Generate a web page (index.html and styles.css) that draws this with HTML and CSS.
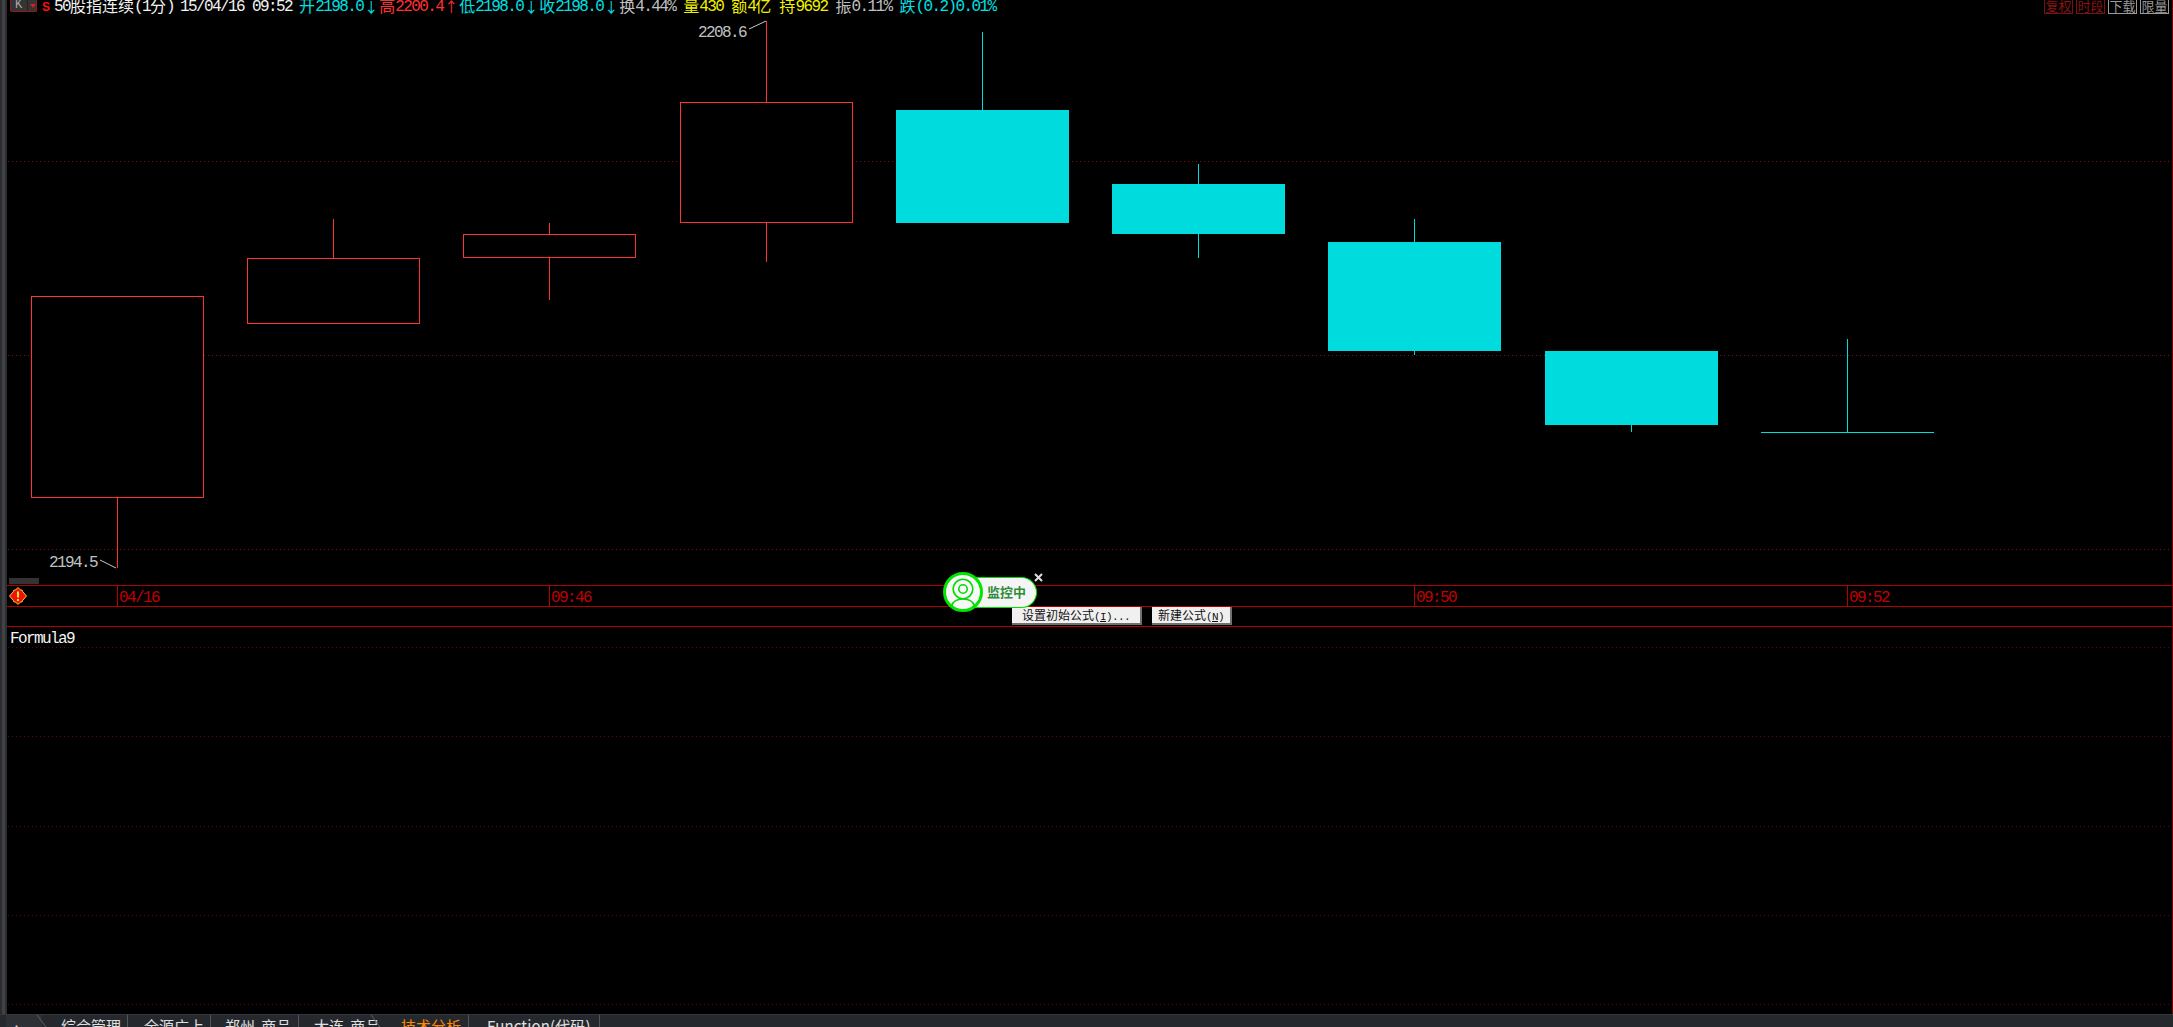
FILE: index.html
```html
<!DOCTYPE html>
<html lang="zh-CN">
<head>
<meta charset="utf-8">
<title>50股指连续</title>
<link rel="stylesheet" href="styles.css">
</head>
<body>
<div class="workspace">
  <div class="strip"></div>
  <div class="panes">
    <header class="header">
      <div class="quote">
        <span class="period-btn"><span class="period-k">K</span><span class="period-caret"></span></span>
        <span class="s-mark">S</span>
        <span class="line white"><span class="m">50</span>股指连续<span class="m">(1</span>分<span class="m">) </span><span class="m date">15/04/16 09:52 </span></span>
        <span class="line cyan">开<span class="m">2198.0</span><span class="arrow">↓</span></span>
        <span class="line red">高<span class="m">2200.4</span><span class="arrow">↑</span></span>
        <span class="line cyan">低<span class="m">2198.0</span><span class="arrow">↓</span></span>
        <span class="line cyan">收<span class="m">2198.0</span><span class="arrow">↓</span></span>
        <span class="line gray">换<span class="m">4.44% </span></span>
        <span class="line yellow">量<span class="m">430 </span></span>
        <span class="line yellow">额<span class="m">4</span>亿<span class="m"> </span></span>
        <span class="line yellow">持<span class="m">9692 </span></span>
        <span class="line gray">振<span class="m">0.11% </span></span>
        <span class="line cyan">跌<span class="m">(0.2)0.01%</span></span>
      </div>
      <div class="tools">
        <span class="tool tool-red">复权</span>
        <span class="tool tool-red">时段</span>
        <span class="tool tool-gray">下载</span>
        <span class="tool tool-gray">限量</span>
      </div>
    </header>

    <svg class="price-pane" viewBox="7 14 2165 571" width="2165" height="571" xmlns="http://www.w3.org/2000/svg">
      <g class="grid">
        <line x1="8" x2="2172" y1="161.5" y2="161.5"/>
        <line x1="8" x2="2172" y1="355.5" y2="355.5"/>
        <line x1="8" x2="2172" y1="549.5" y2="549.5"/>
      </g>
      <rect class="scroll-tick" x="9" y="578" width="30" height="6"/>

      <g class="up">
        <line x1="117.5" x2="117.5" y1="497" y2="568"/>
        <rect x="31.5" y="296.5" width="172" height="201"/>
        <line x1="333.5" x2="333.5" y1="219" y2="258"/>
        <rect x="247.5" y="258.5" width="172" height="65"/>
        <line x1="549.5" x2="549.5" y1="223" y2="300"/>
        <rect x="463.5" y="234.5" width="172" height="23"/>
        <line x1="766.5" x2="766.5" y1="21" y2="262"/>
        <rect x="680.5" y="102.5" width="172" height="120"/>
      </g>
      <g class="down">
        <line x1="982.5" x2="982.5" y1="32" y2="110"/>
        <rect x="896" y="110" width="173" height="113"/>
        <line x1="1198.5" x2="1198.5" y1="164" y2="258"/>
        <rect x="1112" y="184" width="173" height="50"/>
        <line x1="1414.5" x2="1414.5" y1="219" y2="355"/>
        <rect x="1328" y="242" width="173" height="109"/>
        <line x1="1631.5" x2="1631.5" y1="351" y2="432"/>
        <rect x="1545" y="351" width="173" height="74"/>
        <line x1="1847.5" x2="1847.5" y1="339" y2="432"/>
        <line x1="1761" x2="1934" y1="432.5" y2="432.5"/>
      </g>

      <g class="leader">
        <line x1="749" y1="29" x2="766" y2="21"/>
        <line x1="100" y1="560" x2="116" y2="568"/>
      </g>
      <text class="price-label" x="698" y="37">2208.6</text>
      <text class="price-label" x="49" y="567">2194.5</text>
    </svg>

    <div class="axis">
      <svg class="alert-icon" viewBox="0 0 18 18" width="18" height="18" xmlns="http://www.w3.org/2000/svg">
        <path class="alert-body" d="M9 .5 11.500 3H13l.8 1.800L17.500 9l-3.700 4.200L13 15h-1.500L9 17.500 6.500 15H5l-.8-1.800L.5 9l3.700-4.200L5 3h1.500z"/>
        <rect class="alert-mark" x="8" y="4.500" width="2" height="6"/>
        <rect class="alert-mark" x="8" y="12" width="2" height="2"/>
      </svg>
      <span class="mark mark-a"><span class="m">04/16</span></span>
      <span class="mark mark-b"><span class="m">09:46</span></span>
      <span class="mark mark-c"><span class="m">09:50</span></span>
      <span class="mark mark-d"><span class="m">09:52</span></span>
    </div>

    <div class="button-row">
      <button class="win-btn btn-init">设置初始公式<span class="btn-latin">(<u>I</u>)...</span></button>
      <button class="win-btn btn-new">新建公式<span class="btn-latin">(<u>N</u>)</span></button>
    </div>

    <section class="formula-pane">
      <svg class="formula-grid" viewBox="7 627 2165 387" width="2165" height="387" xmlns="http://www.w3.org/2000/svg">
        <g class="grid grid-dim">
          <line x1="8" x2="2172" y1="647.5" y2="647.5"/>
          <line x1="8" x2="2172" y1="736.5" y2="736.5"/>
          <line x1="8" x2="2172" y1="826.5" y2="826.5"/>
          <line x1="8" x2="2172" y1="915.5" y2="915.5"/>
          <line x1="8" x2="2172" y1="1004.5" y2="1004.5"/>
        </g>
      </svg>
      <div class="formula-name"><span class="m">Formula9</span></div>
    </section>
  </div>
</div>

<nav class="tabs">
  <span class="tab tab-nav"><span class="nav-arrow">▲</span></span>
  <span class="tab tab-1">综合管理</span>
  <span class="tab tab-2">全源广上</span>
  <span class="tab tab-3">郑州 商品</span>
  <span class="tab tab-4">大连 商品</span>
  <span class="tab tab-5">技术分析</span>
  <span class="tab tab-6">Function(代码)</span>
</nav>

<div class="monitor">
  <span class="monitor-avatar">
    <svg viewBox="0 0 34 34" width="34" height="34" xmlns="http://www.w3.org/2000/svg">
      <circle cx="17" cy="14" r="9.800"/>
      <circle cx="17" cy="14" r="4.200"/>
      <path d="M5.500 31c1.500-5 6-7 11.500-7s10 2 11.500 7"/>
    </svg>
  </span>
  <span class="monitor-pill">监控中</span>
  <svg class="monitor-close" viewBox="0 0 9 9" width="9" height="9" xmlns="http://www.w3.org/2000/svg">
    <path d="M1 1l7 7M8 1 1 8"/>
  </svg>
</div>
</body>
</html>
```

FILE: styles.css
```css
* { box-sizing: border-box; }

html, body {
  margin: 0;
  height: 100%;
  background: #000;
  overflow: hidden;
}

body {
  display: flex;
  flex-direction: column;
  font-family: "Noto Sans CJK SC", "Liberation Sans", sans-serif;
  color: #c8c8c8;
}

.m {
  font-family: "Liberation Mono", "Noto Sans CJK SC", monospace;
  font-size: 16px;
  letter-spacing: -1.6px;
  white-space: pre;
}

.workspace {
  flex: 1;
  min-height: 0;
  display: flex;
}

.strip {
  width: 7px;
  flex: none;
  background: linear-gradient(to right, #2a2c2f 0, #2a2c2f 2px, #404245 2px, #404245 5px, #2c2e31 5px);
}

.panes {
  flex: 1;
  min-width: 0;
  display: flex;
  flex-direction: column;
  border-right: 1px solid #7a0000;
}

/* header */
.header {
  height: 14px;
  flex: none;
  display: flex;
  justify-content: space-between;
  position: relative;
  z-index: 2;
}

.quote {
  display: flex;
  align-items: flex-start;
  padding-left: 3px;
  white-space: nowrap;
  font-size: 16px;
  line-height: 10px;
}

.period-btn {
  width: 27px;
  height: 12px;
  display: flex;
  align-items: center;
  border: 1px solid #8a1c1c;
  border-top: 0;
  border-radius: 0 0 2px 2px;
  background: #343434;
}

.period-k {
  width: 17px;
  padding-left: 4px;
  border-right: 1px solid #222;
  color: #a8a8a8;
  font: 12px/11px "Liberation Mono", monospace;
}

.period-caret {
  margin-left: 2px;
  border-left: 3px solid transparent;
  border-right: 3px solid transparent;
  border-top: 4px solid #d02020;
}

.s-mark {
  width: 17px;
  padding-left: 5px;
  color: #ff1010;
  font: bold 12px/14px "Liberation Sans", sans-serif;
}

.line { display: inline-flex; align-items: flex-start; }
.line .m { line-height: 14px; }
.line .date { margin-left: -2px; margin-right: -1px; }
.white { color: #f2f2f2; }
.cyan { color: #00e0e6; }
.red { color: #ff3232; }
.yellow { color: #f2f200; }
.gray { color: #c0c0c0; }

.arrow {
  width: 16px;
  text-align: center;
  font-size: 14px;
  line-height: 12px;
}

.tools {
  display: flex;
  gap: 3px;
  padding-right: 3px;
  align-items: flex-start;
}

.tool {
  width: 29px;
  height: 14px;
  border: 1px solid;
  border-top: 0;
  font-size: 13px;
  line-height: 11px;
  text-align: center;
  overflow: hidden;
}

.tool-red { color: #8a1414; border-color: #7a1010; }
.tool-gray { color: #9a9a9a; border-color: #9a9a9a; }

/* price pane */
.price-pane {
  display: block;
  flex: none;
  shape-rendering: crispEdges;
}

.grid line {
  stroke: #8c0a0a;
  stroke-width: 1;
  stroke-dasharray: 1 3;
}

.grid-dim line { stroke: #5e0808; }

.scroll-tick { fill: #333; }

.up rect { fill: #000; stroke: #ff3232; stroke-width: 1; }
.up line { stroke: #ff3232; stroke-width: 1; }
.down rect { fill: #00dcde; }
.down line { stroke: #00dcde; stroke-width: 1; }

.leader line {
  stroke: #c8c8c8;
  stroke-width: 1;
  shape-rendering: auto;
}

.price-label {
  fill: #c0c0c0;
  font-family: "Liberation Mono", monospace;
  font-size: 16px;
  letter-spacing: -1.6px;
}

/* time axis */
.axis {
  position: relative;
  flex: none;
  height: 22px;
  display: flex;
  align-items: center;
  padding-left: 2px;
  border-top: 1px solid #b30000;
  border-bottom: 1px solid #b30000;
}

.alert-icon { display: block; }
.alert-body { fill: #f01010; stroke: #f0d020; stroke-width: 1; }
.alert-mark { fill: #ffe820; }

.mark {
  position: absolute;
  top: 0;
  height: 20px;
  padding-left: 1px;
  border-left: 1px solid #b30000;
  color: #c00000;
  line-height: 18px;
}

.mark-a { left: 110px; }
.mark-b { left: 542px; }
.mark-c { left: 1407px; }
.mark-d { left: 1840px; }

/* buttons */
.button-row {
  flex: none;
  height: 20px;
  display: flex;
  gap: 10px;
  padding-left: 1005px;
  border-bottom: 1px solid #b30000;
}

.win-btn {
  height: 18px;
  margin: 0;
  padding: 0;
  border: 0;
  border-right: 2px solid #707070;
  border-bottom: 2px solid #707070;
  border-radius: 0;
  background: #f0f0f0;
  color: #111;
  font: 12px/15px "Noto Sans CJK SC", sans-serif;
}

.btn-latin {
  font-family: "Liberation Mono", monospace;
  font-size: 11px;
  letter-spacing: -0.6px;
}

.btn-init { width: 130px; }
.btn-new { width: 80px; }

/* formula pane */
.formula-pane {
  flex: 1;
  min-height: 0;
  position: relative;
}

.formula-grid {
  display: block;
  shape-rendering: crispEdges;
}

.formula-name {
  position: absolute;
  top: 0;
  left: 3px;
  color: #f4f4f4;
  line-height: 18px;
}

/* bottom tabs */
.tabs {
  flex: none;
  height: 13px;
  display: flex;
  padding-left: 6px;
  overflow: hidden;
  background: #25292d;
  border-top: 1px solid #34383c;
  color: #e0e0e0;
  font-size: 15px;
  line-height: 22px;
  word-spacing: 3px;
  white-space: nowrap;
}

.tab {
  flex: none;
  display: block;
  border-right: 1px solid #55585b;
}

.tab-nav {
  position: relative;
  width: 36px;
  padding-left: 6px;
  border-right: 0;
  background: #2d3135;
}

.tab-nav::after,
.tab-5::before {
  content: "";
  position: absolute;
  top: 0;
  bottom: 0;
  width: 1px;
  background: #5c6064;
  transform: skewX(36deg);
}

.tab-nav::after { right: 0; }
.tab-5::before { left: 0; }

.nav-arrow { font-size: 9px; color: #ccc; }

.tab-1 { width: 86px; padding-left: 19px; }
.tab-2 { width: 83px; padding-left: 16px; }
.tab-3 { width: 88px; padding-left: 14px; }
.tab-4 { width: 76px; padding-left: 15px; border-right: 0; }
.tab-5 { position: relative; width: 94px; padding-left: 26px; color: #ff8a00; }
.tab-6 { width: 131px; padding-left: 18px; letter-spacing: 0.15px; }

/* monitor badge */
.monitor {
  position: absolute;
  left: 943px;
  top: 572px;
  width: 94px;
  height: 40px;
  display: flex;
  align-items: center;
  z-index: 5;
}

.monitor-avatar {
  position: relative;
  z-index: 1;
  flex: none;
  width: 40px;
  height: 40px;
  display: flex;
  align-items: center;
  justify-content: center;
  border: 3px solid #00e600;
  border-radius: 50%;
  background: #f8f8f8;
}

.monitor-avatar svg {
  fill: none;
  stroke: #00dc00;
  stroke-width: 1.6;
}

.monitor-pill {
  flex: none;
  width: 74px;
  height: 31px;
  margin-left: -20px;
  padding-left: 24px;
  border: 1px solid #00e000;
  border-left: 0;
  border-radius: 0 16px 16px 0;
  background: #f5f5f5;
  color: #2f8a3a;
  font-size: 13px;
  font-weight: 700;
  line-height: 28px;
}

.monitor-close {
  position: absolute;
  right: -6px;
  top: 1px;
  fill: none;
  stroke: #e0e0e0;
  stroke-width: 2;
}
```
